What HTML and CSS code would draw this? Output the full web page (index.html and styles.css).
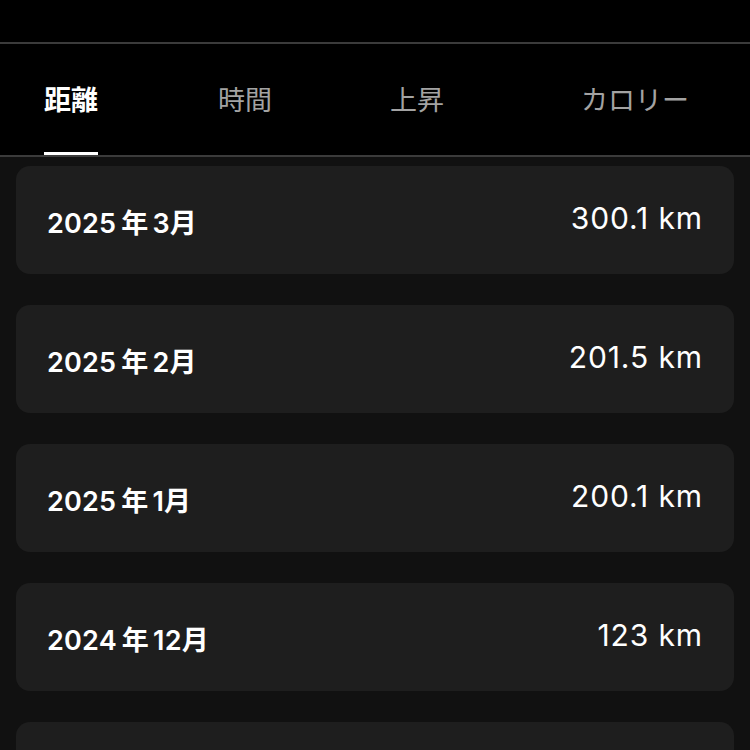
FILE: index.html
```html
<!DOCTYPE html>
<html lang="ja">
<head>
<meta charset="utf-8">
<link rel="stylesheet" href="styles.css">
</head>
<body>
<div class="status"></div>
<nav class="tabs">
  <div class="tab active">距離</div>
  <div class="tab t2">時間</div>
  <div class="tab t3">上昇</div>
  <div class="tab t4">カロリー</div>
</nav>
<main class="list">
  <div class="card"><span class="label">2025<span class="nen">年</span>3月</span><span class="value">300.1 km</span></div>
  <div class="card"><span class="label">2025<span class="nen">年</span>2月</span><span class="value">201.5 km</span></div>
  <div class="card"><span class="label">2025<span class="nen">年</span>1月</span><span class="value">200.1 km</span></div>
  <div class="card"><span class="label">2024<span class="nen">年</span>12月</span><span class="value">123 km</span></div>
  <div class="card"><span class="label"></span><span class="value"></span></div>
</main>
</body>
</html>
```
FILE: styles.css
```css
html, body {
  margin: 0;
  padding: 0;
  background: #111111;
  height: 750px;
  overflow: hidden;
  font-family: Inter, "Noto Sans CJK JP", sans-serif;
  color: #ffffff;
}
.status {
  height: 42px;
  background: #000;
  border-bottom: 2px solid #3b3b3b;
}
.tabs {
  display: flex;
  height: 111px;
  background: #000;
  border-bottom: 2px solid #3b3b3b;
  padding-left: 44px;
}
.tab {
  display: flex;
  align-items: center;
  font-size: 27px;
  color: #a3a3a3;
  border-bottom: 3px solid transparent;
  font-family: "Noto Sans CJK JP", sans-serif;
}
.tab.active {
  color: #fff;
  font-weight: 700;
  border-bottom-color: #fff;
}
.tab.t2 { margin-left: 120px; }
.tab.t3 { margin-left: 118px; }
.tab.t4 { margin-left: 137px; }
.list {
  display: flex;
  flex-direction: column;
  gap: 31px;
  padding: 9px 16px 0;
}
.card {
  flex: 0 0 108px;
  height: 108px;
  box-sizing: border-box;
  background: #1e1e1e;
  border-radius: 14px;
  display: flex;
  align-items: center;
  justify-content: space-between;
  padding: 0 31px;
}
.label {
  font-size: 27px;
  font-weight: 600;
  letter-spacing: 0.2px;
  padding-top: 2px;
}
.nen {
  margin: 0 4px 0 5px;
}
.value {
  font-size: 30px;
  font-weight: 400;
  letter-spacing: 0.9px;
  margin-bottom: 4px;
}
```
